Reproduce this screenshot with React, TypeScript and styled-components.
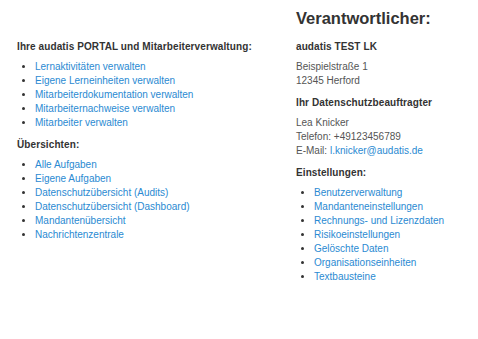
import React from 'react';
import styled, { createGlobalStyle } from 'styled-components';

const GlobalStyle = createGlobalStyle`
    body {
        margin: 0;
        background: #ffffff;
        font-family: "Liberation Sans", Arial, sans-serif;
        font-size: 10px;
        line-height: 14px;
        color: #555555;
    }
`

const portalLinks = [
    'Lernaktivitäten verwalten',
    'Eigene Lerneinheiten verwalten',
    'Mitarbeiterdokumentation verwalten',
    'Mitarbeiternachweise verwalten',
    'Mitarbeiter verwalten',
]

const overviewLinks = [
    'Alle Aufgaben',
    'Eigene Aufgaben',
    'Datenschutzübersicht (Audits)',
    'Datenschutzübersicht (Dashboard)',
    'Mandantenübersicht',
    'Nachrichtenzentrale',
]

const settingsLinks = [
    'Benutzerverwaltung',
    'Mandanteneinstellungen',
    'Rechnungs- und Lizenzdaten',
    'Risikoeinstellungen',
    'Gelöschte Daten',
    'Organisationseinheiten',
    'Textbausteine',
]

const LinkList = ({ items }: { items: string[] }) => (
    <List>
        {items.map((item) => (
            <Item key={item}>
                <Link href="#">{item}</Link>
            </Item>
        ))}
    </List>
)

export default function App() {
    return (
        <>
            <GlobalStyle />
            <Page>
                <Title>Verantwortlicher:</Title>
                <LeftColumn>
                    <Heading>Ihre audatis PORTAL und Mitarbeiterverwaltung:</Heading>
                    <LinkList items={portalLinks} />
                    <Heading>Übersichten:</Heading>
                    <LinkList items={overviewLinks} />
                </LeftColumn>
                <RightColumn>
                    <Heading>audatis TEST LK</Heading>
                    <Text>
                        Beispielstraße 1<br />
                        12345 Herford
                    </Text>
                    <Heading>Ihr Datenschutzbeauftragter</Heading>
                    <Text>
                        Lea Knicker<br />
                        Telefon: +49123456789<br />
                        E-Mail: <Link href="#">l.knicker@audatis.de</Link>
                    </Text>
                    <Heading>Einstellungen:</Heading>
                    <LinkList items={settingsLinks} />
                </RightColumn>
            </Page>
        </>
    );
}

const Page = styled.div`
    display: grid;
    grid-template-columns: 279px 1fr;
    grid-template-areas:
        ". title"
        "left right";
    padding: 8px 0 0 17px;
`

const Title = styled.h1`
    grid-area: title;
    margin: 0 0 12px;
    font-size: 16.5px;
    line-height: 20px;
    font-weight: 700;
    color: #333333;
`

const LeftColumn = styled.div`
    grid-area: left;
`

const RightColumn = styled.div`
    grid-area: right;
`

const Heading = styled.h4`
    margin: 0 0 6px;
    font-size: 10px;
    line-height: 14px;
    font-weight: 700;
    letter-spacing: 0.1px;
    color: #333333;
`

const Text = styled.p`
    margin: 0 0 8px;
`

const List = styled.ul`
    margin: 0 0 8px;
    padding-left: 18px;
    color: #333333;
`

const Item = styled.li`
    line-height: 14px;
`

const Link = styled.a`
    color: #2a8ad2;
    text-decoration: none;
`
